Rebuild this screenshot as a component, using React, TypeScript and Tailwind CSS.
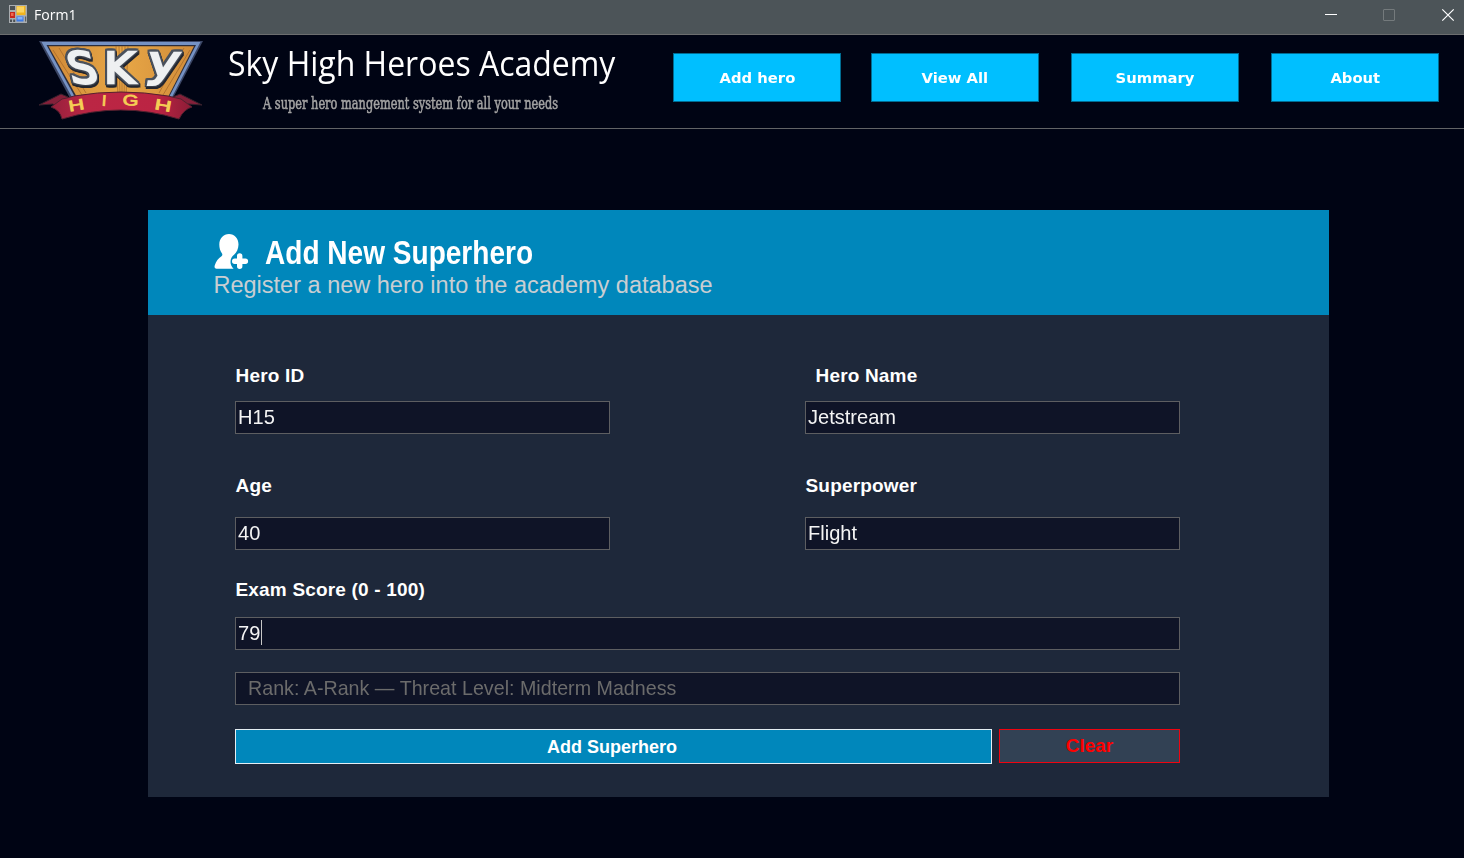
import React from "react";

function FormIcon() {
  return (
    <svg width="18" height="18" viewBox="0 0 18 18" className="shrink-0">
      <rect width="18" height="18" fill="#a9adb0" />
      <rect x="1" y="1" width="5" height="4" fill="#4b5054" />
      <rect x="7.5" y="1" width="9" height="9" fill="#f2b41c" />
      <rect x="8" y="1.5" width="7" height="6" fill="#fcd560" />
      <rect x="1" y="7" width="5" height="6" fill="#c8281c" />
      <rect x="2" y="8" width="2.5" height="3" fill="#ee6a50" />
      <rect x="7.5" y="11.5" width="7" height="5" fill="#3d7be6" />
      <rect x="8.5" y="12" width="5" height="2.5" fill="#83b3fb" />
      <rect x="1" y="14.5" width="2" height="2.5" fill="#4b5054" />
      <rect x="4.2" y="14.5" width="2" height="2.5" fill="#4b5054" />
      <rect x="16" y="11.5" width="1.2" height="5" fill="#5a5e61" />
    </svg>
  );
}

function Logo() {
  return (
    <svg width="164" height="80" viewBox="39 40 164 80" className="shrink-0">
      <defs>
        <linearGradient id="gold" x1="0" x2="1">
          <stop offset="0" stopColor="#d08a38" />
          <stop offset="0.5" stopColor="#e8a746" />
          <stop offset="1" stopColor="#d18c3a" />
        </linearGradient>
        <linearGradient id="ribbon" x1="0" x2="1">
          <stop offset="0" stopColor="#96203c" />
          <stop offset="0.25" stopColor="#bb2644" />
          <stop offset="0.75" stopColor="#bb2443" />
          <stop offset="1" stopColor="#8c1c36" />
        </linearGradient>
      </defs>
      <path d="M39 41H203L172 100H71Z" fill="#3b4665" />
      <path d="M41.5 42H200.5L171 99H73Z" fill="#7592c4" />
      <path d="M46.5 45H196L168 99H76Z" fill="#2b2d3c" />
      <path d="M48.500 46.200H194L167 99H78Z" fill="url(#gold)" />
      <path
        d="M116 46l2 50M119 46l1 50M122 46v50M125 46l-1 50M128 46l-2 50M53 50l29 45M59 48l27 45M190 50l-27 45M184 48l-25 45"
        stroke="#a86b2b"
        strokeWidth="0.8"
      />
      <g
        className="[filter:drop-shadow(1.5px_0_0_#4a515c)_drop-shadow(-1.5px_0_0_#4a515c)_drop-shadow(0_1.5px_0_#3a404b)_drop-shadow(0_-1.5px_0_#4a515c)_drop-shadow(1px_2px_0_#23262f)]"
        fontFamily="DejaVu Sans, sans-serif"
        fontSize="43"
        fill="#eef0f1"
        stroke="#eef0f1"
        strokeWidth="2.600"
        strokeLinejoin="miter"
      >
        <text transform="translate(72 83) skewX(14) scale(1.020 1)">S</text>
        <text transform="translate(104 83) scale(1.080 1)">K</text>
        <text transform="translate(146 75.500) skewX(-10) scale(1.250 1)" fontSize="42">y</text>
      </g>
      <path d="M39 105L61 94L68 97L60 110L53 104Z" fill="#85203a" stroke="#38212c" />
      <path d="M202 105L180 94L173 97L181 110L188 104Z" fill="#85203a" stroke="#38212c" />
      <path
        d="M62 99Q68 98 74 96Q121 88 168 96Q176 98 181 99L192 107Q184 109 179 119Q121 101 62 119Q60 110 51 107Z"
        fill="url(#ribbon)"
        stroke="#55202f"
        strokeWidth="1"
      />
      <g
        fill="#f5cf55"
        stroke="#f5cf55"
        strokeWidth="0.8"
        fontFamily="Liberation Sans, sans-serif"
        fontSize="15"
      >
        <text transform="translate(69.500 111.500) rotate(-10) scale(1.450 1)">H</text>
        <text transform="translate(101.500 105.500) rotate(4) scale(1.100 1)">I</text>
        <text transform="translate(122.500 105) rotate(3) scale(1.350 1)">G</text>
        <text transform="translate(154 109) rotate(10) scale(1.550 1)">H</text>
      </g>
    </svg>
  );
}

function AddUserIcon() {
  return (
    <svg width="35" height="36" viewBox="0 0 35 36" className="shrink-0">
      <path
        d="M15 0C20.500 0 24.500 4.500 24.500 10.500C24.500 14.800 22.500 18.600 20.300 20.600C17.800 22.300 16.500 25 16.500 28C16.500 30.500 17.600 32.800 19.600 34.700H2.500C.6 34.700 .2 33.300 .8 31.300C2 27.300 4.300 24.300 7.500 22.300C8.500 21.500 8.500 20.500 8 19.500C6.200 17 5.300 14 5.300 10.500C5.300 4.500 9.500 0 15 0Z"
        fill="white"
      />
      <path d="M25.700 22V32.200M20.700 27.200H31.400" stroke="white" strokeWidth="5.400" strokeLinecap="round" />
    </svg>
  );
}

function NavButton({ label }: { label: string }) {
  return (
    <button className="h-[49px] w-[168px] border border-[#006c92] bg-[#00bfff] text-center font-['DejaVu_Sans'] text-[15px] font-bold leading-[47px] text-white">
      <span className="inline-block origin-bottom scale-x-[0.985] scale-y-[0.96]">{label}</span>
    </button>
  );
}

function Label({ children, className = "" }: { children: string; className?: string }) {
  return (
    <div className={"h-[22px] whitespace-nowrap text-[19px] font-bold leading-[22px] tracking-[0.18px] text-white " + className}>
      {children}
    </div>
  );
}

function Field({ value, caret = false }: { value: string; caret?: boolean }) {
  return (
    <div className="flex h-[33px] items-center border border-[#5d5e61] bg-[#0f1427] pb-[2px] pl-[2px] text-[21px] leading-[29px] text-[#f4f4f4]">
      <span className="inline-block origin-left scale-x-[0.955] whitespace-nowrap">{value}</span>
      {caret && <span className="h-[25px] w-px bg-[#c8c8c8]" />}
    </div>
  );
}

export default function App() {
  return (
    <div className="flex h-[858px] w-[1464px] flex-col overflow-hidden bg-[#000414] font-['Liberation_Sans',sans-serif]">
      <header className="flex h-[35px] shrink-0 items-start border-b border-[#6c6e6f] bg-[#4c5458]">
        <div className="flex pl-[9px] pt-[5px]">
          <FormIcon />
          <span className="-mt-px ml-[7px] font-['Open_Sans'] text-[15px] leading-[20px] text-white">
            <span className="inline-block origin-left scale-x-[0.94]">Form1</span>
          </span>
        </div>
        <svg width="140" height="30" viewBox="1324 0 140 30" className="ml-auto" fill="none">
          <path d="M1325 14.500h12" stroke="white" />
          <rect x="1383.500" y="9.500" width="11" height="11" rx="0.500" stroke="#747a7c" />
          <path d="M1442.300 9.300l11.400 11.400M1453.700 9.300l-11.400 11.400" stroke="white" strokeWidth="1.200" />
        </svg>
      </header>

      <section className="flex h-[94px] shrink-0 items-start border-b border-[#626466] pl-[39px]">
        <div className="w-[164px] pt-[5px]">
          <Logo />
        </div>
        <div className="ml-[25px] w-[445px]">
          <h1 className="mt-[4px] h-[48px] whitespace-nowrap font-['Open_Sans'] text-[34px] font-normal leading-[48px] text-white">
            <span className="inline-block origin-left scale-x-[0.9405]">Sky High Heroes Academy</span>
          </h1>
          <p className="ml-[35px] mt-[4px] h-[24px] whitespace-nowrap font-['DejaVu_Serif'] text-[17px] leading-[24px] text-[#a3a3a3]">
            <span className="inline-block origin-left scale-x-[0.669] [-webkit-text-stroke:0.6px_#a3a3a3]">
              A super hero mangement system for all your needs
            </span>
          </p>
        </div>
        <nav className="flex pt-[18px]">
          <NavButton label="Add hero" />
          <div className="ml-[30px] flex gap-[32px]">
            <NavButton label="View All" />
            <NavButton label="Summary" />
            <NavButton label="About" />
          </div>
        </nav>
      </section>

      <main className="ml-[148px] mt-[81px] h-[587px] w-[1181px] bg-[#1e283a]">
        <div className="h-[105px] bg-[#0087bb] pl-[66px] pt-[24px]">
          <div className="flex h-[37px]">
            <AddUserIcon />
            <h2 className="ml-[16px] whitespace-nowrap text-[33px] font-bold leading-[37px] text-white">
              <span className="inline-block origin-left scale-x-[0.85]">Add New Superhero</span>
            </h2>
          </div>
          <p className="-ml-[0.5px] h-[28px] whitespace-nowrap text-[23.5px] leading-[28px] text-[#c9ced2]">
            Register a new hero into the academy database
          </p>
        </div>

        <div className="ml-[87px] w-[945px] pt-[50px]">
          <div className="grid grid-cols-[375px_375px] justify-between">
            <div>
              <Label className="pl-[0.5px]">Hero ID</Label>
              <div className="mt-[14px]"><Field value="H15" /></div>
            </div>
            <div>
              <Label className="pl-[10.5px]">Hero Name</Label>
              <div className="mt-[14px]"><Field value="Jetstream" /></div>
            </div>
          </div>
          <div className="mt-[41px] grid grid-cols-[375px_375px] justify-between">
            <div>
              <Label className="pl-[0.5px]">Age</Label>
              <div className="mt-[20px]"><Field value="40" /></div>
            </div>
            <div>
              <Label className="pl-[0.5px]">Superpower</Label>
              <div className="mt-[20px]"><Field value="Flight" /></div>
            </div>
          </div>
          <Label className="mt-[29px] pl-[0.5px]">Exam Score (0 - 100)</Label>
          <div className="mt-[16px]"><Field value="79" caret /></div>
          <div className="mt-[22px] flex h-[33px] items-center border border-[#5d5e61] bg-[#0f1427] pb-[2px] pl-[12px] text-[21px] leading-[29px] text-[#6b6b6b]">
            <span className="inline-block origin-left scale-x-[0.937] whitespace-nowrap">
              Rank: A-Rank — Threat Level: Midterm Madness
            </span>
          </div>
          <div className="mt-[24px] flex items-start gap-[7px]">
            <button className="h-[35px] w-[757px] border border-[#e4eef3] bg-[#0087bb] pr-[3px] pt-px text-[18px] font-bold leading-[32px] text-white">
              Add Superhero
            </button>
            <button className="h-[34px] w-[181px] border border-[#f00410] bg-[#324154] pb-px text-[19px] font-bold leading-[30px] text-[#ff0000]">
              Clear
            </button>
          </div>
        </div>
      </main>
    </div>
  );
}
